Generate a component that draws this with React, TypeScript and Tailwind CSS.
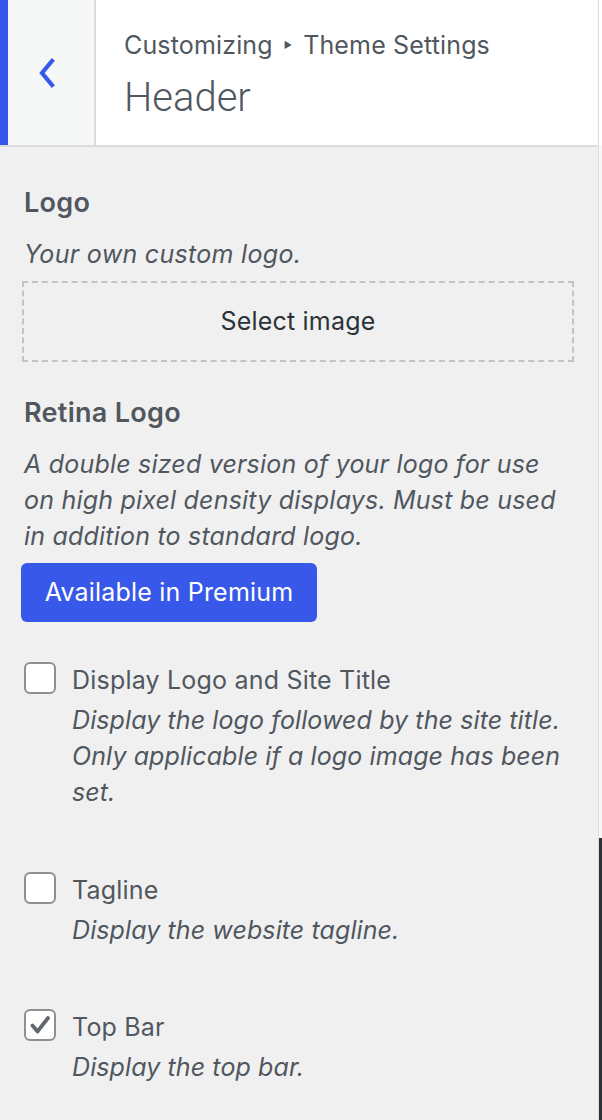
const font = { fontFamily: "Inter, Roboto, 'Liberation Sans', sans-serif" };

const Checkbox = ({ checked }: { checked?: boolean }) => (
  <div className="w-[32px] h-[32px] shrink-0 rounded-[6px] border-2 border-[#8c8f94] bg-white flex items-center justify-center">
    {checked && (
      <svg width="24" height="24" viewBox="0 0 24 24">
        <path d="M4.5 12.5 L9.5 18.5 L20 5" fill="none" stroke="#646970" strokeWidth="3.8" strokeLinecap="round" strokeLinejoin="round" />
      </svg>
    )}
  </div>
);

const CheckRow = ({ label, desc, checked }: { label: string; desc: string[]; checked?: boolean }) => (
  <div className="flex gap-[16px]">
    <Checkbox checked={checked} />
    <div className="flex flex-col">
      <div className="text-[25px] leading-[36px] tracking-[0.2px] text-[#50575e]">{label}</div>
      <div className="mt-[4px] text-[25px] leading-[36px] italic tracking-[0.1px] text-[#50575e]">
        {desc.map((d, i) => (
          <div key={i}>{d}</div>
        ))}
      </div>
    </div>
  </div>
);

export default function App() {
  return (
    <div style={font} className="w-[602px] h-[1120px] flex bg-[#f0f0f1] overflow-hidden">
      <div className="w-[598px] flex flex-col">
        {/* header */}
        <div className="h-[147px] flex bg-white border-b-2 border-[#dcdcde]">
          <div className="w-[8px] bg-[#3858e9]" />
          <div className="w-[88px] bg-[#f6f7f7] border-r-2 border-[#dcdcde] flex items-center justify-center">
            <svg width="20" height="32" viewBox="0 0 20 32" className="ml-[-6px]">
              <path d="M14 4 L4 16 L14 28" fill="none" stroke="#3858e9" strokeWidth="4.2" strokeLinecap="square" />
            </svg>
          </div>
          <div className="flex flex-col pl-[28px] pt-[28px]">
            <div className="text-[25px] leading-[34px] tracking-[0.15px] text-[#50575e] flex items-center">
              Customizing
              <span className="text-[9px] mx-[11px] text-[#50575e]">▶</span>
              Theme Settings
            </div>
            <div
              style={{ fontFamily: "Roboto, sans-serif" }}
              className="text-[40px] leading-[48px] mt-[12px] font-light text-[#50575e]"
            >
              Header
            </div>
          </div>
        </div>

        {/* content */}
        <div className="flex flex-col pl-[24px] pr-[24px] pt-[40px]">
          <div className="text-[27px] leading-[32px] font-semibold tracking-[0.3px] text-[#50575e]">Logo</div>
          <div className="mt-[17px] text-[25px] leading-[36px] italic tracking-[0.3px] text-[#50575e]">
            Your own custom logo.
          </div>
          <div className="mt-[9px] h-[81px] ml-[-2px] border-2 border-dashed border-[#c3c4c7] flex items-center justify-center text-[25px] tracking-[0.2px] text-[#2c3338]">
            Select image
          </div>

          <div className="mt-[35px] text-[27px] leading-[32px] font-semibold tracking-[0.3px] text-[#50575e]">
            Retina Logo
          </div>
          <div className="mt-[17px] text-[25px] leading-[36px] italic tracking-[0.2px] text-[#50575e]">
            <div>A double sized version of your logo for use</div>
            <div>on high pixel density displays. Must be used</div>
            <div>in addition to standard logo.</div>
          </div>
          <div className="mt-[9px]">
            <div className="inline-flex items-center justify-center ml-[-3px] h-[59px] w-[296px] rounded-[6px] bg-[#3858e9] text-white text-[25px] tracking-[0.2px]">
              Available in Premium
            </div>
          </div>

          <div className="mt-[40px] flex flex-col">
            <CheckRow
              label="Display Logo and Site Title"
              desc={[
                "Display the logo followed by the site title.",
                "Only applicable if a logo image has been",
                "set.",
              ]}
            />
            <div className="mt-[62px]">
              <CheckRow label="Tagline" desc={["Display the website tagline."]} />
            </div>
            <div className="mt-[61px]">
              <CheckRow checked label="Top Bar" desc={["Display the top bar."]} />
            </div>
          </div>
        </div>
      </div>
      <div className="w-[4px] flex flex-col border-l border-[#dcdcde]">
        <div className="h-[145px] bg-white" />
        <div className="h-[693px] bg-[#f6f7f7]" />
        <div className="flex-1 bg-[#2c3338]" />
      </div>
    </div>
  );
}
